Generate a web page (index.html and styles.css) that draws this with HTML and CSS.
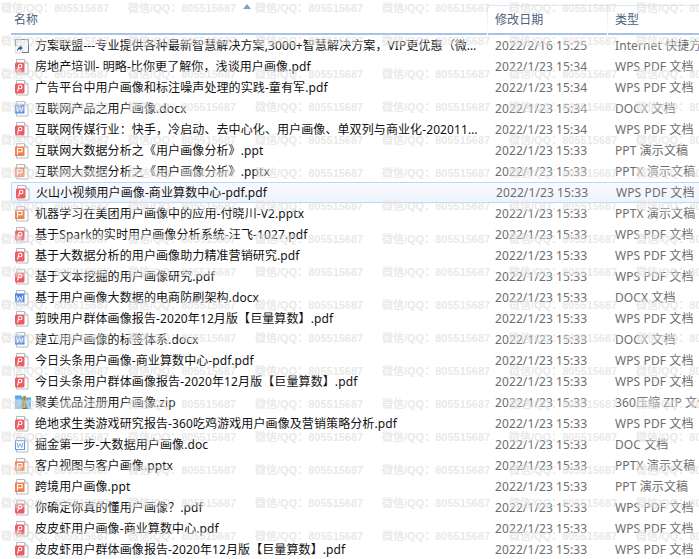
FILE: index.html
```html
<!DOCTYPE html>
<html>
<head>
  <title>用户画像</title>
  <link rel="stylesheet" href="styles.css">
</head>
<body>
  <svg class="defs" width="0" height="0">
    <symbol id="sheet" viewBox="0 0 16 16">
      <path d="M1.500 .5h8l3.500 3.500v11h-11.500z" fill="#fff" stroke="#b4b8bd"/>
      <path d="M9.500 .5v3.500h3.500" fill="#eceef1" stroke="#b4b8bd"/>
    </symbol>
    <symbol id="pdf" viewBox="0 0 16 16">
      <use href="#sheet"/>
      <rect x="0" y="3.500" width="9.500" height="10" rx="1.500" fill="#ee5a5f"/>
      <circle cx="5.200" cy="7" r="1.800" fill="none" stroke="#fff" stroke-width="1.100"/>
      <path d="M3.400 7.500c0 2-.6 3.200-1.100 4" fill="none" stroke="#fff" stroke-width="1.100"/>
    </symbol>
    <symbol id="word" viewBox="0 0 16 16">
      <use href="#sheet"/>
      <rect x="0" y="3.500" width="9.500" height="9" fill="#4b85e0"/>
      <path d="M1.500 5.500l1.200 5 2-3.800 2 3.800 1.200-5" fill="none" stroke="#fff"/>
    </symbol>
    <symbol id="doc" viewBox="0 0 16 16">
      <use href="#sheet"/>
      <rect x=".5" y="3.500" width="9" height="9" fill="#fff" stroke="#5f93e6"/>
      <path d="M2 5.500l1.200 5 1.800-3.800 1.800 3.800 1.200-5" fill="none" stroke="#5f93e6" stroke-width=".8"/>
    </symbol>
    <symbol id="slide" viewBox="0 0 16 16">
      <use href="#sheet"/>
      <rect x="0" y="3.500" width="9.500" height="9.500" fill="#f0814f"/>
      <path d="M2.500 11.500v-6h4.500v3.200h-4.500" fill="none" stroke="#fff" stroke-width="1.100"/>
    </symbol>
    <symbol id="zip" viewBox="0 0 16 16">
      <path d="M0 .5h6l1.500 2h8.500v11.500h-16z" fill="#4ea4e8"/>
      <rect x="0" y="4.500" width="16" height="9.500" fill="#6cb8f0"/>
      <rect x="8" y="1" width="3" height="13" fill="#e8a72c"/>
      <path d="M8.500 2h2M8.500 4h2M8.500 6h2M8.500 8h2" stroke="#8a5a10"/>
      <rect x="8" y="9.500" width="3" height="4" fill="none" stroke="#8a5a10"/>
    </symbol>
    <symbol id="link" viewBox="0 0 16 16">
      <rect x=".5" y="1.500" width="13" height="13" fill="#f4f6f8" stroke="#6f7a86"/>
      <rect x="0" y="8" width="7" height="7" fill="#fff" stroke="#9aa3ad" stroke-width=".5"/>
      <path d="M2 13.500c0-3 1.500-4.500 3-4.500v-1.500l2.500 2.500-2.500 2.500v-1.500c-1 0-2 .8-3 2.500z" fill="#2456a8"/>
    </symbol>
  </svg>

  <div class="explorer">
    <div class="head">
      <div class="sort-cell"><span class="sort-arrow"></span></div>
      <div class="head-row">
        <div class="head-cell head-name">名称</div>
        <div class="head-cell head-date">修改日期</div>
        <div class="head-cell head-type">类型</div>
      </div>
    </div>
    <div class="list" id="list"></div>
    <div class="marks" id="marks"></div>
  </div>

  <script>
    const files = [
      ['link', '方案联盟---专业提供各种最新智慧解决方案,3000+智慧解决方案，VIP更优惠（微…', '2022/2/16 15:25', 'Internet 快捷方式'],
      ['pdf', '房地产培训- 明略-比你更了解你，浅谈用户画像.pdf', '2022/1/23 15:34', 'WPS PDF 文档'],
      ['pdf', '广告平台中用户画像和标注噪声处理的实践-童有军.pdf', '2022/1/23 15:34', 'WPS PDF 文档'],
      ['word', '互联网产品之用户画像.docx', '2022/1/23 15:34', 'DOCX 文档'],
      ['pdf', '互联网传媒行业：快手，冷启动、去中心化、用户画像、单双列与商业化-202011…', '2022/1/23 15:34', 'WPS PDF 文档'],
      ['slide', '互联网大数据分析之《用户画像分析》.ppt', '2022/1/23 15:33', 'PPT 演示文稿'],
      ['slide', '互联网大数据分析之《用户画像分析》.pptx', '2022/1/23 15:33', 'PPTX 演示文稿'],
      ['pdf', '火山小视频用户画像-商业算数中心-pdf.pdf', '2022/1/23 15:33', 'WPS PDF 文档'],
      ['slide', '机器学习在美团用户画像中的应用-付晓川-V2.pptx', '2022/1/23 15:33', 'PPTX 演示文稿'],
      ['pdf', '基于Spark的实时用户画像分析系统-汪飞-1027.pdf', '2022/1/23 15:33', 'WPS PDF 文档'],
      ['pdf', '基于大数据分析的用户画像助力精准营销研究.pdf', '2022/1/23 15:33', 'WPS PDF 文档'],
      ['pdf', '基于文本挖掘的用户画像研究.pdf', '2022/1/23 15:33', 'WPS PDF 文档'],
      ['word', '基于用户画像大数据的电商防刷架构.docx', '2022/1/23 15:33', 'DOCX 文档'],
      ['pdf', '剪映用户群体画像报告-2020年12月版【巨量算数】.pdf', '2022/1/23 15:33', 'WPS PDF 文档'],
      ['word', '建立用户画像的标签体系.docx', '2022/1/23 15:33', 'DOCX 文档'],
      ['pdf', '今日头条用户画像-商业算数中心-pdf.pdf', '2022/1/23 15:33', 'WPS PDF 文档'],
      ['pdf', '今日头条用户群体画像报告-2020年12月版【巨量算数】.pdf', '2022/1/23 15:33', 'WPS PDF 文档'],
      ['zip', '聚美优品注册用户画像.zip', '2022/1/23 15:33', '360压缩 ZIP 文件'],
      ['pdf', '绝地求生类游戏研究报告-360吃鸡游戏用户画像及营销策略分析.pdf', '2022/1/23 15:33', 'WPS PDF 文档'],
      ['doc', '掘金第一步-大数据用户画像.doc', '2022/1/23 15:33', 'DOC 文档'],
      ['slide', '客户视图与客户画像.pptx', '2022/1/23 15:33', 'PPTX 演示文稿'],
      ['slide', '跨境用户画像.ppt', '2022/1/23 15:33', 'PPT 演示文稿'],
      ['pdf', '你确定你真的懂用户画像？.pdf', '2022/1/23 15:33', 'WPS PDF 文档'],
      ['pdf', '皮皮虾用户画像-商业算数中心.pdf', '2022/1/23 15:33', 'WPS PDF 文档'],
      ['pdf', '皮皮虾用户群体画像报告-2020年12月版【巨量算数】.pdf', '2022/1/23 15:33', 'WPS PDF 文档']
    ];

    const list = document.getElementById('list');
    files.forEach((file, i) => {
      const row = document.createElement('div');
      row.className = i === 7 ? 'row hover' : 'row';
      row.innerHTML = `
        <svg class="icon"><use href="#${file[0]}"/></svg>
        <div class="name">${file[1]}</div>
        <div class="date">${file[2]}</div>
        <div class="type">${file[3]}</div>
      `;
      list.appendChild(row);
    });

    // watermark that lies over the whole picture: 17 rows of 6
    const marks = document.getElementById('marks');
    for (let i = 0; i < 17 * 6; i++) {
      const mark = document.createElement('span');
      mark.className = 'mark';
      mark.textContent = '微信/QQ：805515687';
      marks.appendChild(mark);
    }
  </script>
</body>
</html>
```

FILE: styles.css
```css
* {
  box-sizing: border-box;
}

html,
body {
  margin: 0;
  height: 100%;
  background-color: #fff;
}

.defs {
  position: absolute;
}

.explorer {
  position: relative;
  height: 559px;
  overflow: hidden;
  font-family: "Noto Sans", "Noto Sans CJK SC", sans-serif;
  font-size: 12px;
  letter-spacing: 0.1px;
}

.head {
  height: 35px;
  margin-left: 11px;
  border-bottom: 2px solid #a9c3e4;
}

.sort-cell {
  display: flex;
  justify-content: center;
  height: 5px;
  padding: 2px 0 0 0;
  width: 472px;
}

.sort-arrow {
  width: 0;
  height: 0;
  margin-top: 2px;
  border-left: 4px solid transparent;
  border-right: 4px solid transparent;
  border-bottom: 5px solid #7aa3c8;
}

.head-row {
  display: grid;
  grid-template-columns: 477px 120px 1fr;
  height: 28px;
}

.head-cell {
  color: #4c607a;
  line-height: 30px;
  white-space: nowrap;
  border-right: 1px solid;
  border-image: linear-gradient(#dfe7f1, #fff) 1;
}

.head-name {
  padding-left: 3px;
}

.head-date {
  padding-left: 7px;
  border-top: 1px solid;
  line-height: 28px;
}

.head-type {
  padding-left: 7px;
  border-top: 1px solid;
  border-right: none;
  line-height: 28px;
}

.row {
  display: grid;
  grid-template-columns: 11px 24px 453px 127px 1fr;
  align-items: center;
  height: 21px;
  white-space: nowrap;
  line-height: 19px;
}

.row.hover {
  margin-left: 11px;
  grid-template-columns: 24px 453px 127px 1fr;
  border: 1px solid #b9d7fb;
  border-right: none;
  border-radius: 2px 0 0 2px;
  background: linear-gradient(#f8fbff, #edf4fd);
}

.icon {
  grid-column: 2;
  width: 16px;
  height: 16px;
  margin-left: 4px;
}

.hover .icon {
  grid-column: 1;
}

.name {
  color: #111;
  overflow: hidden;
}

.date {
  padding-left: 7px;
  color: #6d6d6d;
}

.type {
  color: #6d6d6d;
  overflow: hidden;
}

.marks {
  position: absolute;
  top: 0;
  left: 1px;
  display: grid;
  grid-template-columns: repeat(6, 127px);
  grid-auto-rows: 33px;
  pointer-events: none;
}

.mark {
  height: 33px;
  font-family: "Liberation Sans", "Noto Sans CJK SC", sans-serif;
  font-size: 11px;
  font-weight: bold;
  line-height: 16px;
  letter-spacing: 0;
  color: rgba(190, 190, 190, 0.35);
  text-shadow: 0 0 2px rgba(255, 255, 255, 0.7);
  white-space: nowrap;
}
```
